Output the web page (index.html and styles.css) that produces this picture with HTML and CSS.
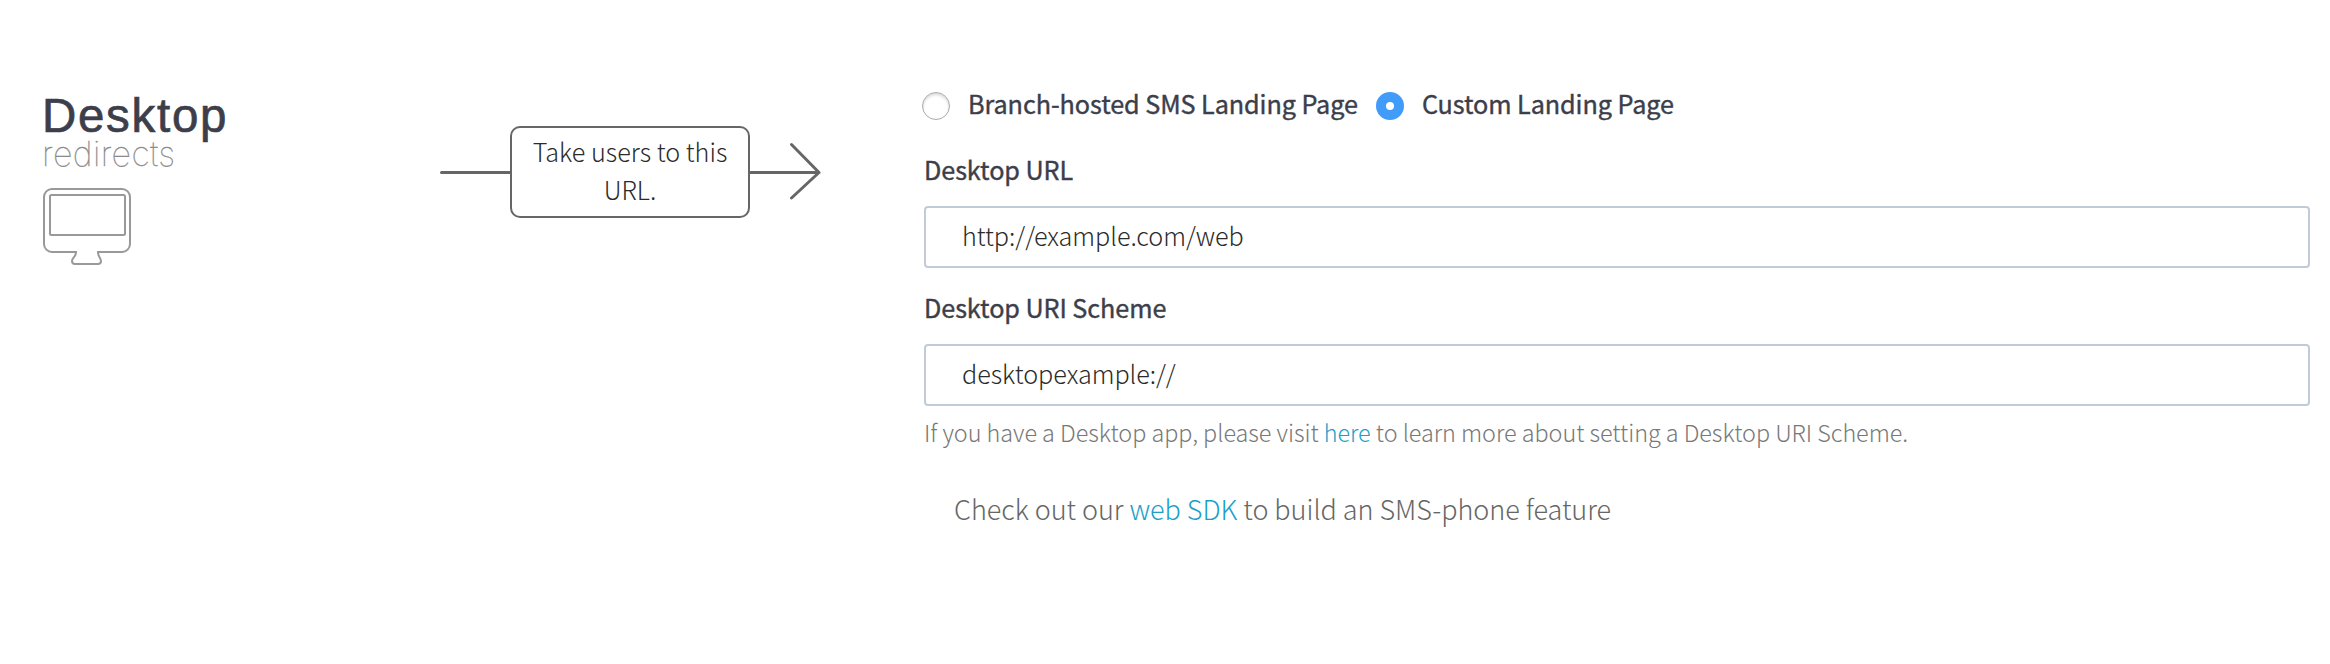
FILE: index.html
```html
<!DOCTYPE html>
<html lang="en">
<head>
<meta charset="utf-8">
<title>Desktop redirects</title>
<link rel="stylesheet" href="styles.css">
</head>
<body>
<main class="redirects">
  <section class="platform">
    <h2 class="platform-title">Desktop</h2>
    <p class="platform-subtitle">redirects</p>
    <svg class="monitor" width="90" height="80" viewBox="0 0 90 80" fill="none" stroke="#999" stroke-width="2">
      <rect x="2" y="2" width="86" height="63" rx="8"/>
      <rect x="8" y="8" width="75" height="40" rx="1.5"/>
      <path d="M34 65C34 70 30 71 30 74Q30 77 33 77H56Q59 77 59 74C59 71 56 70 56 65" fill="#fff"/>
      <path d="M35 65H55" stroke="#fff" stroke-width="3"/>
    </svg>
  </section>
  <section class="flow">
    <svg width="70" height="60" viewBox="0 0 70 60" fill="none" stroke="#666" stroke-width="3" stroke-linecap="round"><path d="M1.5 30.5H70"/></svg>
    <div class="flow-label">Take users to this URL.</div>
    <svg width="72" height="60" viewBox="0 0 72 60" fill="none" stroke="#666" stroke-width="3" stroke-linecap="round" stroke-linejoin="round"><path d="M0 30.5H69M41.5 2.5L69 30.5L41.5 56"/></svg>
  </section>
  <form class="settings">
    <div class="options">
      <label class="option"><span class="radio"></span><span class="option-text">Branch-hosted SMS Landing Page</span></label>
      <label class="option"><span class="radio radio-on"></span><span class="option-text">Custom Landing Page</span></label>
    </div>
    <label class="field-label">Desktop URL</label>
    <div class="field">http://example.com/web</div>
    <label class="field-label second">Desktop URI Scheme</label>
    <div class="field">desktopexample://</div>
    <p class="hint">If you have a Desktop app, please visit <a class="link">here</a> to learn more about setting a Desktop URI Scheme.</p>
    <p class="sdk">Check out our <a class="link">web SDK</a> to build an SMS-phone feature</p>
  </form>
</main>
</body>
</html>
```
FILE: styles.css
```css
body {
  margin: 0;
  background: #fff;
  font-family: "Noto Sans CJK SC", "Noto Sans", sans-serif;
  font-size: 25.2px;
  font-weight: 300;
  color: #2b2b2b;
}
p, h2 { margin: 0; }
.redirects {
  display: grid;
  grid-template-columns: 398px 442px 1428px;
  height: 664px;
  padding-left: 42px;
  box-sizing: border-box;
  align-items: start;
  white-space: nowrap;
}
.settings { margin-left: 42px; padding-top: 85px; }

.platform { padding-top: 95px; }
.platform-title {
  font: 400 47.5px/42px "Liberation Sans", Arial, sans-serif;
  letter-spacing: 1.7px;
  color: #3c3e4a;
  -webkit-text-stroke: 0.7px #3c3e4a;
}
.platform-subtitle {
  font: 100 34px/34px Inter, "Liberation Sans", sans-serif;
  letter-spacing: 0.4px;
  color: #888;
  -webkit-text-stroke: 0.3px #888;
}
.monitor { display: block; margin-top: 16px; }

.flow { display: flex; align-items: center; padding-top: 126px; }
.flow-label {
  width: 240px;
  height: 92px;
  box-sizing: border-box;
  border: 2px solid #666;
  border-radius: 10px;
  padding: 4px 20px 0;
  line-height: 38px;
  text-align: center;
  white-space: normal;
}

.options { display: flex; height: 36px; gap: 18px; margin-left: -2px; }
.option { display: flex; align-items: center; gap: 18px; }
.option-text,
.field-label {
  line-height: 36px;
  font-weight: 400;
  letter-spacing: -0.07px;
  color: #3c3e4a;
  -webkit-text-stroke: 0.4px #3c3e4a;
}
.radio {
  width: 28px;
  height: 28px;
  box-sizing: border-box;
  margin-top: 6px;
  border: 1px solid #aaa;
  border-radius: 50%;
  box-shadow: inset 0 2px 3px rgba(0, 0, 0, 0.15);
}
.radio-on { border: 10px solid #419bf9; box-shadow: none; }

.field-label { display: block; margin-top: 30px; }
.field-label.second { margin-top: 21px; }
.field {
  width: 1386px;
  height: 62px;
  box-sizing: border-box;
  margin-top: 19px;
  padding-left: 36px;
  border: 2px solid #c1cbd8;
  border-radius: 4px;
  line-height: 54px;
  letter-spacing: -0.05px;
}
.hint {
  margin-top: 9px;
  font-size: 23.4px;
  line-height: 34px;
  letter-spacing: -0.04px;
  color: #787878;
}
.sdk {
  margin: 40px 0 0 30px;
  font-size: 27px;
  line-height: 40px;
  letter-spacing: -0.03px;
  color: #666;
}
.link { color: #1a9fc9; }
```
